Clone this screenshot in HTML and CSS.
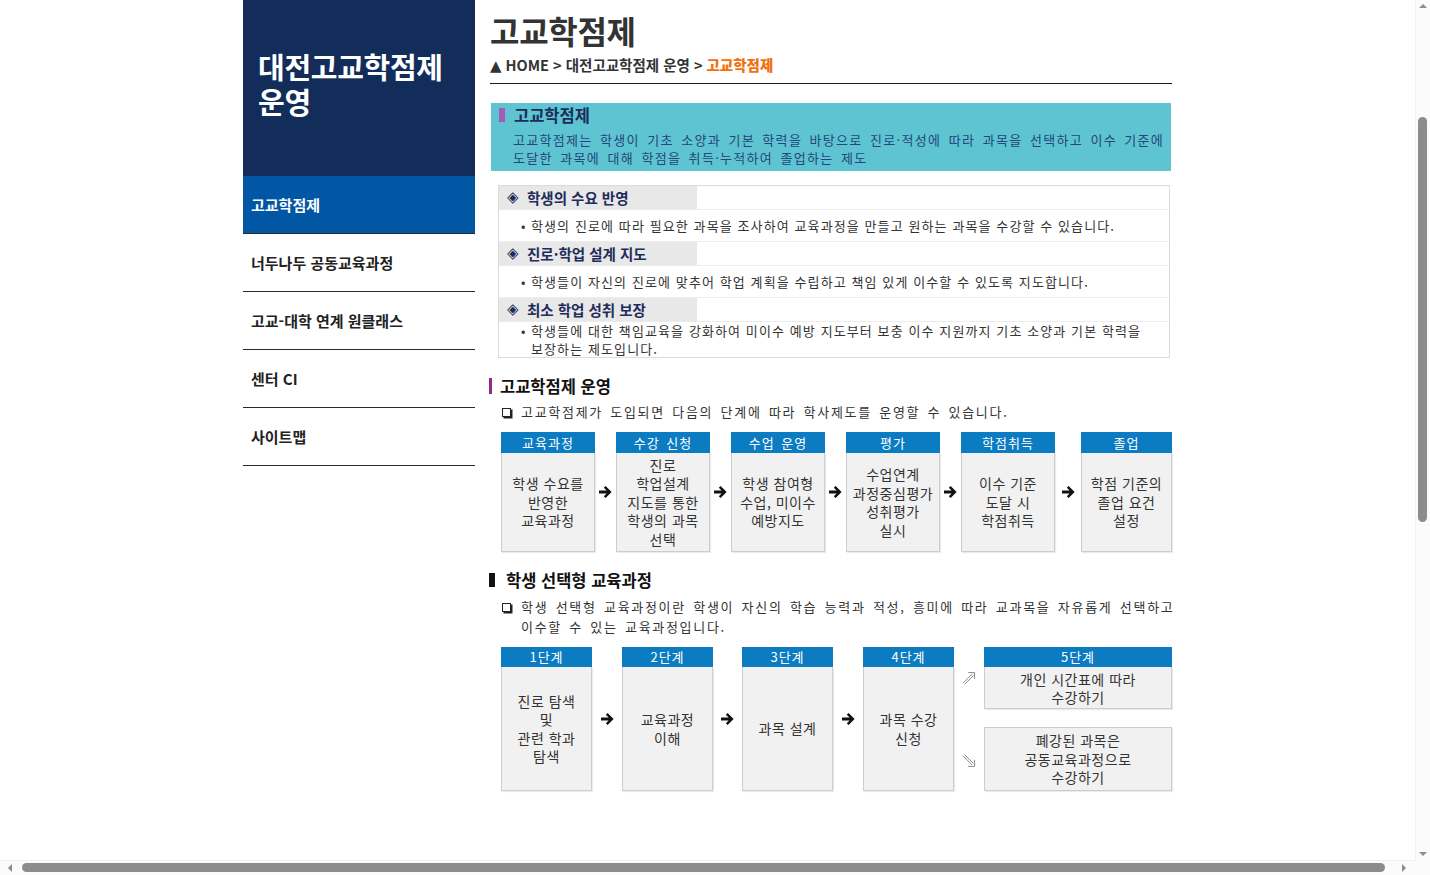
FILE: index.html
```html
<!DOCTYPE html>
<html lang="ko">
<head>
<meta charset="utf-8">
<title>고교학점제 - 대전고교학점제 운영</title>
<link rel="stylesheet" href="styles.css">
</head>
<body>
<div class="viewport">
<div class="container">
  <aside class="lnb">
    <div class="lnb-title"><h2><span>대전고교학점제</span><span>운영</span></h2></div>
    <ul class="lnb-menu">
      <li class="on"><a href="#">고교학점제</a></li>
      <li><a href="#">너두나두 공동교육과정</a></li>
      <li><a href="#">고교-대학 연계 원클래스</a></li>
      <li><a href="#">센터 CI</a></li>
      <li><a href="#">사이트맵</a></li>
    </ul>
  </aside>
  <main class="content">
    <h1 class="page-title">고교학점제</h1>
    <div class="location"><span class="tri">▲</span> HOME &gt; 대전고교학점제 운영 &gt; <strong>고교학점제</strong></div>

    <div class="intro-box">
      <h3 class="intro-title"><span class="intro-bar"></span>고교학점제</h3>
      <p class="intro-text">고교학점제는 학생이 기초 소양과 기본 학력을 바탕으로 진로·적성에 따라 과목을 선택하고 이수 기준에<br>도달한 과목에 대해 학점을 취득·누적하여 졸업하는 제도</p>
    </div>

    <div class="feature-box">
      <div class="item-head"><span class="head-cell"><span class="dia">◈</span>학생의 수요 반영</span></div>
      <div class="item-body"><span class="dot">•</span><span>학생의 진로에 따라 필요한 과목을 조사하여 교육과정을 만들고 원하는 과목을 수강할 수 있습니다.</span></div>
      <div class="item-head"><span class="head-cell"><span class="dia">◈</span>진로·학업 설계 지도</span></div>
      <div class="item-body"><span class="dot">•</span><span>학생들이 자신의 진로에 맞추어 학업 계획을 수립하고 책임 있게 이수할 수 있도록 지도합니다.</span></div>
      <div class="item-head"><span class="head-cell"><span class="dia">◈</span>최소 학업 성취 보장</span></div>
      <div class="item-body tight"><span class="dot">•</span><span>학생들에 대한 책임교육을 강화하여 미이수 예방 지도부터 보충 이수 지원까지 기초 소양과 기본 학력을<br>보장하는 제도입니다.</span></div>
    </div>

    <h3 class="sec-title"><span class="sec-bar purple"></span>고교학점제 운영</h3>
    <p class="desc"><span class="sq"></span><span>고교학점제가 도입되면 다음의 단계에 따라 학사제도를 운영할 수 있습니다.</span></p>

    <div class="flow flow-a">
      <div class="step"><div class="step-head">교육과정</div><div class="step-body">학생 수요를<br>반영한<br>교육과정</div></div>
      <div class="arrow"><svg viewBox="0 0 13 12" width="13" height="12"><path d="M0 4.6H7.6L4.8 1.8 6.6 0 12.6 6 6.6 12 4.8 10.2 7.6 7.4H0Z"/></svg></div>
      <div class="step"><div class="step-head">수강 신청</div><div class="step-body">진로<br>학업설계<br>지도를 통한<br>학생의 과목<br>선택</div></div>
      <div class="arrow"><svg viewBox="0 0 13 12" width="13" height="12"><path d="M0 4.6H7.6L4.8 1.8 6.6 0 12.6 6 6.6 12 4.8 10.2 7.6 7.4H0Z"/></svg></div>
      <div class="step"><div class="step-head">수업 운영</div><div class="step-body">학생 참여형<br>수업, 미이수<br>예방지도</div></div>
      <div class="arrow"><svg viewBox="0 0 13 12" width="13" height="12"><path d="M0 4.6H7.6L4.8 1.8 6.6 0 12.6 6 6.6 12 4.8 10.2 7.6 7.4H0Z"/></svg></div>
      <div class="step"><div class="step-head">평가</div><div class="step-body">수업연계<br>과정중심평가<br>성취평가<br>실시</div></div>
      <div class="arrow"><svg viewBox="0 0 13 12" width="13" height="12"><path d="M0 4.6H7.6L4.8 1.8 6.6 0 12.6 6 6.6 12 4.8 10.2 7.6 7.4H0Z"/></svg></div>
      <div class="step"><div class="step-head">학점취득</div><div class="step-body">이수 기준<br>도달 시<br>학점취득</div></div>
      <div class="arrow wide"><svg viewBox="0 0 13 12" width="13" height="12"><path d="M0 4.6H7.6L4.8 1.8 6.6 0 12.6 6 6.6 12 4.8 10.2 7.6 7.4H0Z"/></svg></div>
      <div class="step last"><div class="step-head">졸업</div><div class="step-body">학점 기준의<br>졸업 요건<br>설정</div></div>
    </div>

    <h3 class="sec-title sec-title2"><span class="sec-bar black"></span>학생 선택형 교육과정</h3>
    <p class="desc desc2"><span class="sq"></span><span>학생 선택형 교육과정이란 학생이 자신의 학습 능력과 적성, 흥미에 따라 교과목을 자유롭게 선택하고<br>이수할 수 있는 교육과정입니다.</span></p>

    <div class="flow flow-b">
      <div class="step"><div class="step-head">1단계</div><div class="step-body">진로 탐색<br>및<br>관련 학과<br>탐색</div></div>
      <div class="arrow"><svg viewBox="0 0 13 12" width="13" height="12"><path d="M0 4.6H7.6L4.8 1.8 6.6 0 12.6 6 6.6 12 4.8 10.2 7.6 7.4H0Z"/></svg></div>
      <div class="step"><div class="step-head">2단계</div><div class="step-body">교육과정<br>이해</div></div>
      <div class="arrow"><svg viewBox="0 0 13 12" width="13" height="12"><path d="M0 4.6H7.6L4.8 1.8 6.6 0 12.6 6 6.6 12 4.8 10.2 7.6 7.4H0Z"/></svg></div>
      <div class="step"><div class="step-head">3단계</div><div class="step-body">과목 설계</div></div>
      <div class="arrow"><svg viewBox="0 0 13 12" width="13" height="12"><path d="M0 4.6H7.6L4.8 1.8 6.6 0 12.6 6 6.6 12 4.8 10.2 7.6 7.4H0Z"/></svg></div>
      <div class="step"><div class="step-head">4단계</div><div class="step-body">과목 수강<br>신청</div></div>
      <div class="diag">
        <svg viewBox="0 0 14 14" width="14" height="14"><path d="M1 12.2 10.2 3M2.6 13.4 11.4 4.6M6.2 1.6H12.6V8" fill="none" stroke="#8a8a8a" stroke-width="1"/></svg>
        <svg viewBox="0 0 14 14" width="14" height="14"><path d="M1 1.8 10.2 11M2.6 0.6 11.4 9.4M6.2 12.4H12.6V6" fill="none" stroke="#8a8a8a" stroke-width="1"/></svg>
      </div>
      <div class="step split">
        <div class="step-head">5단계</div>
        <div class="step-body sub-top">개인 시간표에 따라<br>수강하기</div>
        <div class="step-body sub-bottom">폐강된 과목은<br>공동교육과정으로<br>수강하기</div>
      </div>
    </div>
  </main>
</div>
</div>
<div class="vscroll" aria-hidden="true">
  <div class="sb-btn"><span class="tri-up"></span></div>
  <div class="sb-thumb-v"></div>
  <div class="sb-fill"></div>
  <div class="sb-btn"><span class="tri-down"></span></div>
</div>
<div class="hscroll" aria-hidden="true">
  <div class="sb-btn"><span class="tri-left"></span></div>
  <div class="sb-thumb-h"></div>
  <div class="sb-btn"><span class="tri-right"></span></div>
</div>
<div class="sb-corner"></div>
</body>
</html>
```

FILE: styles.css
```css
html, body {
  margin: 0;
  padding: 0;
}
body {
  height: 100vh;
  overflow: hidden;
  display: grid;
  grid-template-columns: 1fr 15px;
  grid-template-rows: 1fr 15px;
  font-family: "Noto Sans CJK KR", "Noto Sans", "DejaVu Sans", sans-serif;
  color: #333;
  background: #fff;
}
.viewport {
  grid-column: 1;
  grid-row: 1;
  overflow: hidden;
  min-width: 0;
  min-height: 0;
}

/* window scrollbars */
.vscroll {
  grid-column: 2;
  grid-row: 1;
  display: flex;
  flex-direction: column;
  background: #fbfbfb;
  border-left: 1px solid #f1f1f1;
  box-sizing: border-box;
}
.hscroll {
  grid-column: 1;
  grid-row: 2;
  display: flex;
  background: #fbfbfb;
  border-top: 1px solid #f1f1f1;
  box-sizing: border-box;
}
.sb-corner {
  grid-column: 2;
  grid-row: 2;
  background: #fbfbfb;
}
.sb-btn {
  flex: none;
  width: 15px;
  height: 15px;
  display: flex;
  align-items: center;
  justify-content: center;
}
.vscroll .sb-btn {
  width: 14px;
}
.hscroll .sb-btn {
  height: 14px;
}
.tri-up {
  width: 0;
  height: 0;
  border-left: 4px solid transparent;
  border-right: 4px solid transparent;
  border-bottom: 4px solid #8c8c8c;
  margin-top: -4px;
}
.tri-down {
  width: 0;
  height: 0;
  border-left: 4px solid transparent;
  border-right: 4px solid transparent;
  border-top: 4px solid #8c8c8c;
  margin-top: 2px;
}
.tri-left {
  width: 0;
  height: 0;
  border-top: 4px solid transparent;
  border-bottom: 4px solid transparent;
  border-right: 4px solid #8c8c8c;
  margin-left: 4px;
}
.tri-right {
  width: 0;
  height: 0;
  border-top: 4px solid transparent;
  border-bottom: 4px solid transparent;
  border-left: 4px solid #8c8c8c;
  margin-right: 8px;
}
.sb-thumb-v {
  flex: none;
  width: 9px;
  height: 405px;
  margin: 102px 0 0 2px;
  border-radius: 5px;
  background: #8c8c8c;
}
.sb-fill {
  flex: 1;
}
.sb-thumb-h {
  flex: 1;
  height: 9px;
  margin: 2px 15px 0 7px;
  border-radius: 5px;
  background: #8c8c8c;
}

.container {
  width: 929px;
  margin: 0 auto;
  display: flex;
  gap: 15px;
  align-items: flex-start;
}

/* left navigation */
.lnb {
  width: 232px;
  flex: none;
}
.lnb-title {
  background: #132d5b;
  height: 176px;
  box-sizing: border-box;
  padding: 49px 15px 0;
}
.lnb-title h2 {
  margin: 0;
  color: #fff;
  font-size: 29px;
  line-height: 35px;
  font-weight: 700;
  letter-spacing: -0.3px;
}
.lnb-title h2 span {
  display: block;
  height: 35px;
}
.lnb-menu {
  list-style: none;
  margin: 0;
  padding: 0;
}
.lnb-menu li {
  border-bottom: 1px solid #2a2a2a;
}
.lnb-menu a {
  display: block;
  height: 57px;
  line-height: 57px;
  padding-left: 8px;
  font-size: 15px;
  font-weight: 700;
  color: #222;
  text-decoration: none;
}
.lnb-menu li.on a {
  background: #0157a4;
  color: #fff;
}

/* content */
.content {
  flex: 1;
  min-width: 0;
}
.page-title {
  margin: 0;
  padding-top: 10px;
  font-size: 32px;
  line-height: 40px;
  font-weight: 700;
  color: #333;
  letter-spacing: -0.3px;
}
.location {
  margin-top: 5px;
  line-height: 20px;
  padding-bottom: 7px;
  border-bottom: 1px solid #1a1a1a;
  font-size: 14.5px;
  font-weight: 700;
  color: #333;
}
.location .tri {
  font-family: "DejaVu Sans", sans-serif;
  font-size: 15px;
}
.location strong {
  color: #f2700f;
}

.intro-box {
  margin: 19px 1px 0;
  height: 68px;
  box-sizing: border-box;
  padding: 2px 8px 0;
  background: #5ec4d2;
}
.intro-title {
  margin: 0;
  display: flex;
  align-items: center;
  gap: 9px;
  line-height: 20px;
  font-size: 16.5px;
  font-weight: 700;
  color: #1b2d5c;
}
.intro-bar {
  width: 6px;
  height: 14px;
  background: #a35bb8;
}
.intro-text {
  margin: 6px 0 0 14px;
  font-size: 13px;
  line-height: 18px;
  letter-spacing: 1.3px;
  word-spacing: 2.5px;
  color: #24467a;
  white-space: nowrap;
}

.feature-box {
  margin: 14px 2px 0 8px;
  border: 1px solid #dcdcdc;
}
.item-head {
  height: 23px;
  border-bottom: 1px solid #ececec;
}
.head-cell {
  display: flex;
  align-items: center;
  width: 190px;
  height: 23px;
  padding-left: 8px;
  background: #e8e8e8;
  line-height: 23px;
  font-size: 14.5px;
  font-weight: 700;
  color: #1e2c5a;
}
.dia {
  font-family: "DejaVu Sans", sans-serif;
  font-size: 15px;
  font-weight: 400;
  width: 20px;
  color: #1e2c5a;
}
.item-body {
  display: flex;
  padding: 7px 8px 6px 22px;
  border-bottom: 1px solid #ececec;
  font-size: 13px;
  line-height: 18px;
  letter-spacing: 1.1px;
  color: #333;
  white-space: nowrap;
}
.item-body.tight {
  height: 35px;
  box-sizing: border-box;
  padding-top: 0;
  padding-bottom: 0;
  border-bottom: 0;
}
.dot {
  width: 10px;
  flex: none;
}

.sec-title {
  margin: 18px 0 0 -1px;
  display: flex;
  align-items: center;
  line-height: 20px;
  font-size: 16.5px;
  font-weight: 700;
  color: #111;
}
.sec-bar {
  flex: none;
  margin-right: 8px;
}
.sec-bar.purple {
  width: 3px;
  height: 16px;
  background: #8d2a8a;
}
.sec-bar.black {
  width: 6px;
  height: 14px;
  background: #111;
  margin-right: 11px;
}
.sec-title2 {
  margin-top: 18px;
}
.desc {
  margin: 7px 0 0 12px;
  display: flex;
  font-size: 13px;
  line-height: 18px;
  letter-spacing: 1.7px;
  word-spacing: 2px;
  color: #333;
  white-space: nowrap;
}
.desc2 {
  line-height: 20px;
}
.sq {
  flex: none;
  width: 7px;
  height: 7px;
  border: 1px solid #222;
  box-shadow: 1.5px 1.5px 0 #222;
  margin: 5px 10px 0 0;
}
.desc2 .sq {
  margin-top: 6px;
}

/* flows */
.flow {
  display: flex;
  align-items: center;
  margin-left: 11px;
}
.flow-a {
  margin-top: 11px;
}
.flow-b {
  margin-top: 10px;
  align-items: stretch;
}
.step {
  flex: none;
  width: 94px;
  display: flex;
  flex-direction: column;
}
.step-head {
  height: 21px;
  background: #0b7bc2;
  color: #fff;
  font-size: 13px;
  line-height: 21px;
  text-align: center;
  letter-spacing: 1px;
  word-spacing: 2px;
}
.step-body {
  height: 99px;
  box-sizing: border-box;
  display: flex;
  align-items: center;
  justify-content: center;
  text-align: center;
  background: #f1f1f1;
  border: 1px solid #cdcdcd;
  border-top: 0;
  box-shadow: 1px 1px 1px rgba(0, 0, 0, 0.08);
  font-size: 14px;
  line-height: 18.5px;
  letter-spacing: 0.5px;
  color: #333;
}
.step.last {
  width: 91px;
}
.arrow {
  flex: none;
  width: 21px;
  display: flex;
  justify-content: center;
  align-items: center;
}
.arrow.wide {
  width: 26px;
}
.arrow svg {
  fill: #111;
}

.flow-b .step {
  width: 91px;
}
.flow-b .step-head {
  height: 20px;
  line-height: 20px;
}
.flow-b .step-body {
  height: 124px;
}
.flow-b .arrow {
  width: 30px;
}
.flow-b .arrow:nth-child(4) {
  width: 29px;
}
.diag {
  flex: none;
  width: 30px;
  display: flex;
  flex-direction: column;
  align-items: center;
  padding-top: 24px;
  gap: 69px;
  box-sizing: border-box;
}
.step.split {
  width: 188px;
}
.step-body.sub-top {
  height: 42px;
  line-height: 18px;
}
.step-body.sub-bottom {
  height: 64px;
  margin-top: 18px;
  border-top: 1px solid #cdcdcd;
}
```
